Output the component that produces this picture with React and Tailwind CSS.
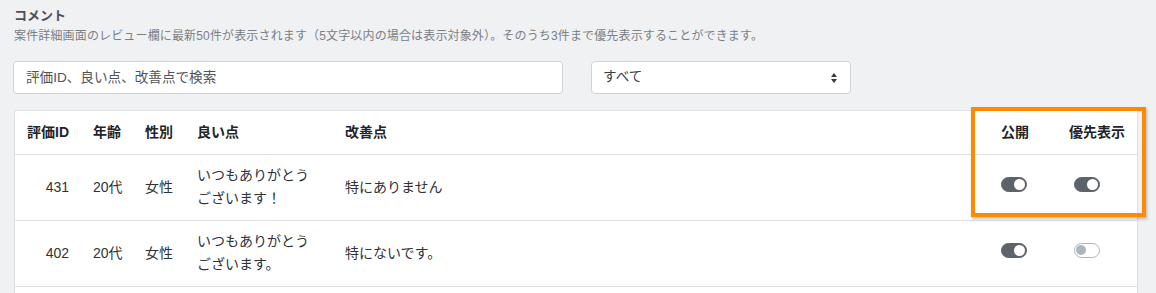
import React from 'react';

const rows = [
  { id: 431, age: '20代', sex: '女性', good: 'いつもありがとうございます！', bad: '特にありません', pub: true, pri: true },
  { id: 402, age: '20代', sex: '女性', good: 'いつもありがとうございます。', bad: '特にないです。', pub: true, pri: false },
];

const Toggle = ({ on }) => (
  <span
    className={`inline-flex items-center w-[26px] h-[15px] rounded-full border mb-[6px] align-middle ${
      on ? 'bg-[#5c636a] border-[#5c636a] justify-end' : 'bg-white border-[#adb5bd] justify-start'
    }`}
  >
    <span className={`block rounded-full ${on ? 'w-[11px] h-[11px] bg-white mr-[1px]' : 'w-[10px] h-[10px] bg-[#adb5bd] ml-[1px]'}`} />
  </span>
);

export default function App() {
  return (
    <div className="min-h-screen bg-[#f0f1f3] pl-[13px] pr-[18px] pt-[8px] font-['Liberation_Sans','Noto_Sans_CJK_JP',sans-serif]">
      {/* heading */}
      <h2 className="text-[13px] font-bold leading-[16px] text-[#4b5157] pl-px">コメント</h2>
      <p className="mt-[4px] text-[12px] tracking-[0.15px] leading-[16px] text-[#7a7f85] pl-px">
        案件詳細画面のレビュー欄に最新50件が表示されます（5文字以内の場合は表示対象外）。そのうち3件まで優先表示することができます。
      </p>

      {/* filters */}
      <div className="mt-[17px] flex gap-[28px]">
        <input
          type="text"
          placeholder="評価ID、良い点、改善点で検索"
          className="w-[550px] h-[33px] bg-white border border-[#ced4da] rounded-[4px] px-3 text-[13.6px] text-[#495057] placeholder-[#50555b] outline-none"
        />
        <div className="relative w-[260px] h-[33px] bg-white border border-[#ced4da] rounded-[4px] flex items-center pl-[11px] text-[13.6px] text-[#3a3f44]">
          すべて
          <svg className="absolute right-[13px] top-[11px]" width="6" height="10" viewBox="0 0 6 10">
            <path d="M3 0 L6 4 H0 Z" fill="#343a40" />
            <path d="M3 10 L6 6 H0 Z" fill="#343a40" />
          </svg>
        </div>
      </div>

      {/* table */}
      <div className="relative mt-[16px] ml-px bg-white border border-[#dee2e6] rounded-tl-[3px]">
        <table className="w-full border-collapse text-[14px] text-[#2f3337]">
          <thead>
            <tr className="h-[43px] border-b border-[#dee2e6] text-[#212529]">
              <th className="w-[66px] pl-3 pr-3 text-right font-bold">評価ID</th>
              <th className="w-[52px] pl-3 text-left font-bold">年齢</th>
              <th className="w-[52px] pl-3 text-left font-bold">性別</th>
              <th className="w-[148px] pl-3 text-left font-bold">良い点</th>
              <th className="pl-3 text-left font-bold">改善点</th>
              <th className="w-[68px] pl-3 text-left font-bold">公開</th>
              <th className="w-[80px] pl-3 text-left font-bold">優先表示</th>
            </tr>
          </thead>
          <tbody>
            {rows.map((r) => (
              <tr key={r.id} className="h-[66px] border-b border-[#dee2e6]">
                <td className="pr-3 text-right">{r.id}</td>
                <td className="pl-3">{r.age}</td>
                <td className="pl-3">{r.sex}</td>
                <td className="pl-3 pr-3 leading-[23px]">{r.good}</td>
                <td className="pl-3">{r.bad}</td>
                <td className="pl-3"><Toggle on={r.pub} /></td>
                <td className="pl-[17px]"><Toggle on={r.pri} /></td>
              </tr>
            ))}
            <tr className="h-[66px]">
              <td colSpan={7} />
            </tr>
          </tbody>
        </table>

        {/* highlight */}
        <div className="absolute left-[956px] top-[-4px] w-[175px] h-[110px] border-4 border-[#ff8a00] shadow-[1px_2px_3px_rgba(0,0,0,0.25)]" />
      </div>
    </div>
  );
}
